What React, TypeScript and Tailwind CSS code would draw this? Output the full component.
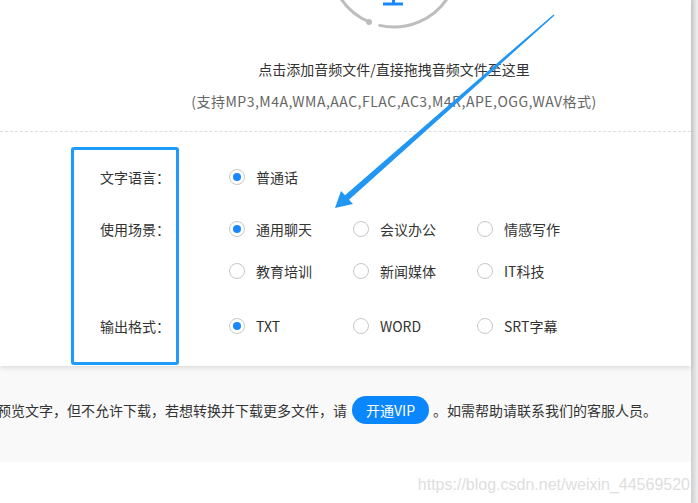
import React from 'react';

const Radio = ({ checked = false, label }: { checked?: boolean; label: string }) => (
  <div className="flex items-center">
    <span className="w-[16px] h-[16px] rounded-full border border-[#c8c8c8] bg-white flex items-center justify-center shrink-0">
      {checked && <span className="w-[8px] h-[8px] rounded-full bg-[#1a87ff]" />}
    </span>
    <span className="ml-[11px] text-[14px] leading-[20px] text-[#333]">{label}</span>
  </div>
);

const Row = ({ label, children, className = '' }: { label?: string; children: React.ReactNode; className?: string }) => (
  <div className={`flex items-center h-[20px] ${className}`}>
    <div className="w-[229px] pl-[100px] text-[14px] leading-[20px] text-[#333]">{label}</div>
    <div className="grid grid-cols-[124px_124px_124px]">{children}</div>
  </div>
);

const App = () => {
  return (
    <div
      className="relative w-[698px] h-[503px] overflow-hidden bg-white flex"
      style={{ fontFamily: '"Noto Sans CJK SC", "Noto Sans", sans-serif' }}
    >
      <div className="w-[691px] flex flex-col">
        {/* upload card */}
        <div className="h-[366px] bg-white relative z-10 shadow-[0_2px_5px_rgba(0,0,0,0.12)]">
          <div className="pl-[97px] flex flex-col items-center">
            <svg width="140" height="30" viewBox="0 0 140 30" className="block">
              <path d="M54.5 25.1 A64 64 0 0 0 125.4 -5" fill="none" stroke="#bdbdbd" strokeWidth="3" />
              <path d="M45 21.9 A64 64 0 0 1 14.6 -5" fill="none" stroke="#bdbdbd" strokeWidth="3" />
              <circle cx="45" cy="21.9" r="3" fill="#bdbdbd" />
              <rect x="59" y="2.5" width="20" height="3" fill="#1a87ff" />
              <rect x="68" y="-5" width="3" height="9" fill="#1a87ff" />
            </svg>
            <p className="mt-[29px] text-[14px] leading-[20px] text-[#333]">点击添加音频文件/直接拖拽音频文件至这里</p>
            <p className="mt-[12px] text-[14px] leading-[20px] text-[#666] tracking-[0.5px]">
              (支持MP3,M4A,WMA,AAC,FLAC,AC3,M4R,APE,OGG,WAV格式)
            </p>
          </div>
          <div className="mt-[20px] border-t border-dashed border-[#dddddd]" />

          <Row label="文字语言：" className="mt-[35px]">
            <Radio checked label="普通话" />
          </Row>
          <Row label="使用场景：" className="mt-[32px]">
            <Radio checked label="通用聊天" />
            <Radio label="会议办公" />
            <Radio label="情感写作" />
          </Row>
          <Row className="mt-[22px]">
            <Radio label="教育培训" />
            <Radio label="新闻媒体" />
            <Radio label="IT科技" />
          </Row>
          <Row label="输出格式：" className="mt-[35px]">
            <Radio checked label="TXT" />
            <Radio label="WORD" />
            <Radio label="SRT字幕" />
          </Row>
        </div>

        {/* notice */}
        <div className="h-[96px] bg-[#f9f9f9] flex items-center pb-[8px]">
          <div className="flex items-center whitespace-nowrap ml-[-3px] text-[14px] text-[#333]">
            <span>预览文字，但不允许下载，若想转换并下载更多文件，请</span>
            <button className="ml-[5px] mr-[4px] h-[28px] px-[14px] rounded-full bg-[#0a86ff] text-white text-[14px]">
              开通VIP
            </button>
            <span>。如需帮助请联系我们的客服人员。</span>
          </div>
        </div>

        <div className="flex-1 bg-white flex justify-end items-start pt-[12px] pr-[1px]">
          <span
            className="text-[16px] leading-[22px] text-[#dedede]"
            style={{ fontFamily: '"Liberation Sans", Arial, sans-serif' }}
          >
            https://blog.csdn.net/weixin_44569520
          </span>
        </div>
      </div>

      {/* right edge strip */}
      <div className="w-[7px] bg-gradient-to-r from-[#cfcfcf] to-[#efefef]" />

      {/* annotation: highlight box */}
      <div className="absolute left-[71px] top-[147px] w-[108px] h-[218px] border-[3px] border-[#1e9bff] rounded-[3px] z-20" />

      {/* annotation: arrow */}
      <svg className="absolute left-0 top-0 z-20" width="698" height="503" viewBox="0 0 698 503">
        <polygon
          points="553.5,14.4 554.5,15.6 349,199.8 353,204 335,208 341,191 345,195.2"
          fill="#2196f3"
        />
      </svg>
    </div>
  );
};

export default App;
